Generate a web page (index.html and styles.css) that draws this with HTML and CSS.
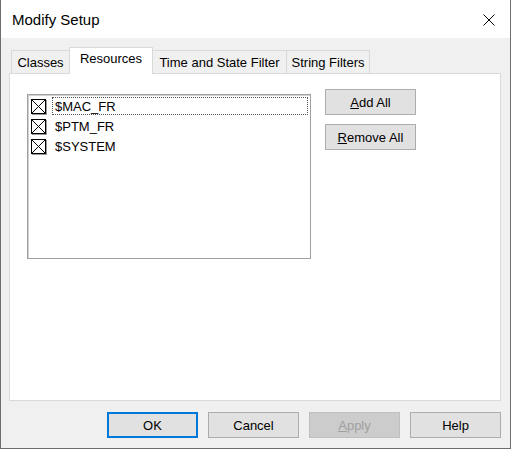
FILE: index.html
```html
<!DOCTYPE html>
<html lang="en">
<head>
  <meta charset="UTF-8">
  <title>Modify Setup</title>
  <link rel="stylesheet" href="styles.css">
</head>
<body>
  <div class="window">
    <div class="titlebar">
      <span class="title">Modify Setup</span>
      <svg class="close" width="12" height="12" viewBox="0 0 12 12">
        <path d="M0.5 0.5 L11.5 11.5 M11.5 0.5 L0.5 11.5" stroke="#000" stroke-width="1" fill="none"/>
      </svg>
    </div>

    <div class="content">
      <div class="tabs">
        <div class="tab tab-classes">Classes</div>
        <div class="tab tab-resources active">Resources</div>
        <div class="tab tab-time">Time and State Filter</div>
        <div class="tab tab-string">String Filters</div>
      </div>

      <div class="panel">
        <div class="listbox">
          <div class="item focused">
            <span class="check"><svg width="13" height="13" viewBox="0 0 13 13"><path d="M0 0 L13 13 M13 0 L0 13" stroke="#000" stroke-width="1"/></svg></span>
            <span class="label">$MAC_FR</span>
          </div>
          <div class="item">
            <span class="check"><svg width="13" height="13" viewBox="0 0 13 13"><path d="M0 0 L13 13 M13 0 L0 13" stroke="#000" stroke-width="1"/></svg></span>
            <span class="label">$PTM_FR</span>
          </div>
          <div class="item">
            <span class="check"><svg width="13" height="13" viewBox="0 0 13 13"><path d="M0 0 L13 13 M13 0 L0 13" stroke="#000" stroke-width="1"/></svg></span>
            <span class="label">$SYSTEM</span>
          </div>
        </div>

        <div class="side-buttons">
          <button class="btn"><u>A</u>dd All</button>
          <button class="btn"><u>R</u>emove All</button>
        </div>
      </div>

      <div class="footer">
        <button class="btn default">OK</button>
        <button class="btn">Cancel</button>
        <button class="btn disabled"><u>A</u>pply</button>
        <button class="btn">Help</button>
      </div>
    </div>
  </div>
</body>
</html>
```

FILE: styles.css
```css
body {
  margin: 0;
  font-family: "Liberation Sans", Arial, sans-serif;
}
.window {
  width: 511px;
  height: 449px;
  box-sizing: border-box;
  border: 1px solid #6e6e6e;
  border-top: none;
  background: #f0f0f0;
  display: flex;
  flex-direction: column;
}
.titlebar {
  height: 38px;
  background: #fff;
  display: flex;
  align-items: center;
  justify-content: space-between;
  padding: 0 15px 0 11px;
  flex-shrink: 0;
}
.title {
  font-size: 15px;
  color: #000;
  margin-top: 1px;
}
.close {
  margin-top: 2px;
}
.content {
  flex: 1;
  padding: 10px 9px 0 8px;
  display: flex;
  flex-direction: column;
}
.tabs {
  display: flex;
  align-items: flex-end;
  height: 25px;
  margin-left: 2px;
  position: relative;
  z-index: 1;
}
.tab {
  height: 23px;
  box-sizing: border-box;
  border: 1px solid #d9d9d9;
  border-bottom: none;
  margin-right: -1px;
  font-size: 13px;
  line-height: 23px;
  text-align: center;
  color: #000;
  background: #f0f0f0;
  white-space: nowrap;
}
.tab-classes { width: 59px; }
.tab-resources { width: 84px; }
.tab-time { width: 135px; }
.tab-string { width: 84px; }
.tab.active {
  height: 27px;
  margin-bottom: -1px;
  background: #fff;
  line-height: 22px;
  position: relative;
  z-index: 2;
}
.panel {
  height: 328px;
  box-sizing: border-box;
  border: 1px solid #d9d9d9;
  background: #fff;
  padding: 15px 0 0 17px;
  display: flex;
  align-items: flex-start;
}
.listbox {
  width: 284px;
  height: 165px;
  box-sizing: border-box;
  margin-top: 5px;
  border: 1px solid #a0a0a0;
  box-shadow: inset 1px 1px 0 #d0d0d0;
  padding: 1px 2px 0 3px;
  background: #fff;
}
.item {
  height: 20px;
  display: flex;
  align-items: center;
}
.check {
  width: 15px;
  height: 15px;
  box-sizing: border-box;
  border: 1px solid #000;
  box-shadow: 1px 1px 0 #9a9a9a;
  display: flex;
  margin-right: 6px;
  flex-shrink: 0;
}
.check svg {
  display: block;
}
.label {
  font-size: 13px;
  color: #000;
  flex: 1;
  height: 18px;
  line-height: 18px;
  padding-left: 2px;
  box-sizing: border-box;
  border: 1px solid transparent;
}
.item.focused .label {
  border: 1px dotted #555;
}
.side-buttons {
  display: flex;
  flex-direction: column;
  gap: 9px;
  margin-left: 14px;
}
.btn {
  width: 91px;
  height: 26px;
  box-sizing: border-box;
  border: 1px solid #adadad;
  background: #e1e1e1;
  font-family: "Liberation Sans", Arial, sans-serif;
  font-size: 13px;
  color: #000;
  padding: 0;
}
.btn.default {
  border: 2px solid #0078d7;
}
.btn.disabled {
  background: #cccccc;
  border-color: #bfbfbf;
  color: #a0a0a0;
}
.footer {
  display: flex;
  justify-content: flex-end;
  gap: 10px;
  margin-top: 11px;
}
```
